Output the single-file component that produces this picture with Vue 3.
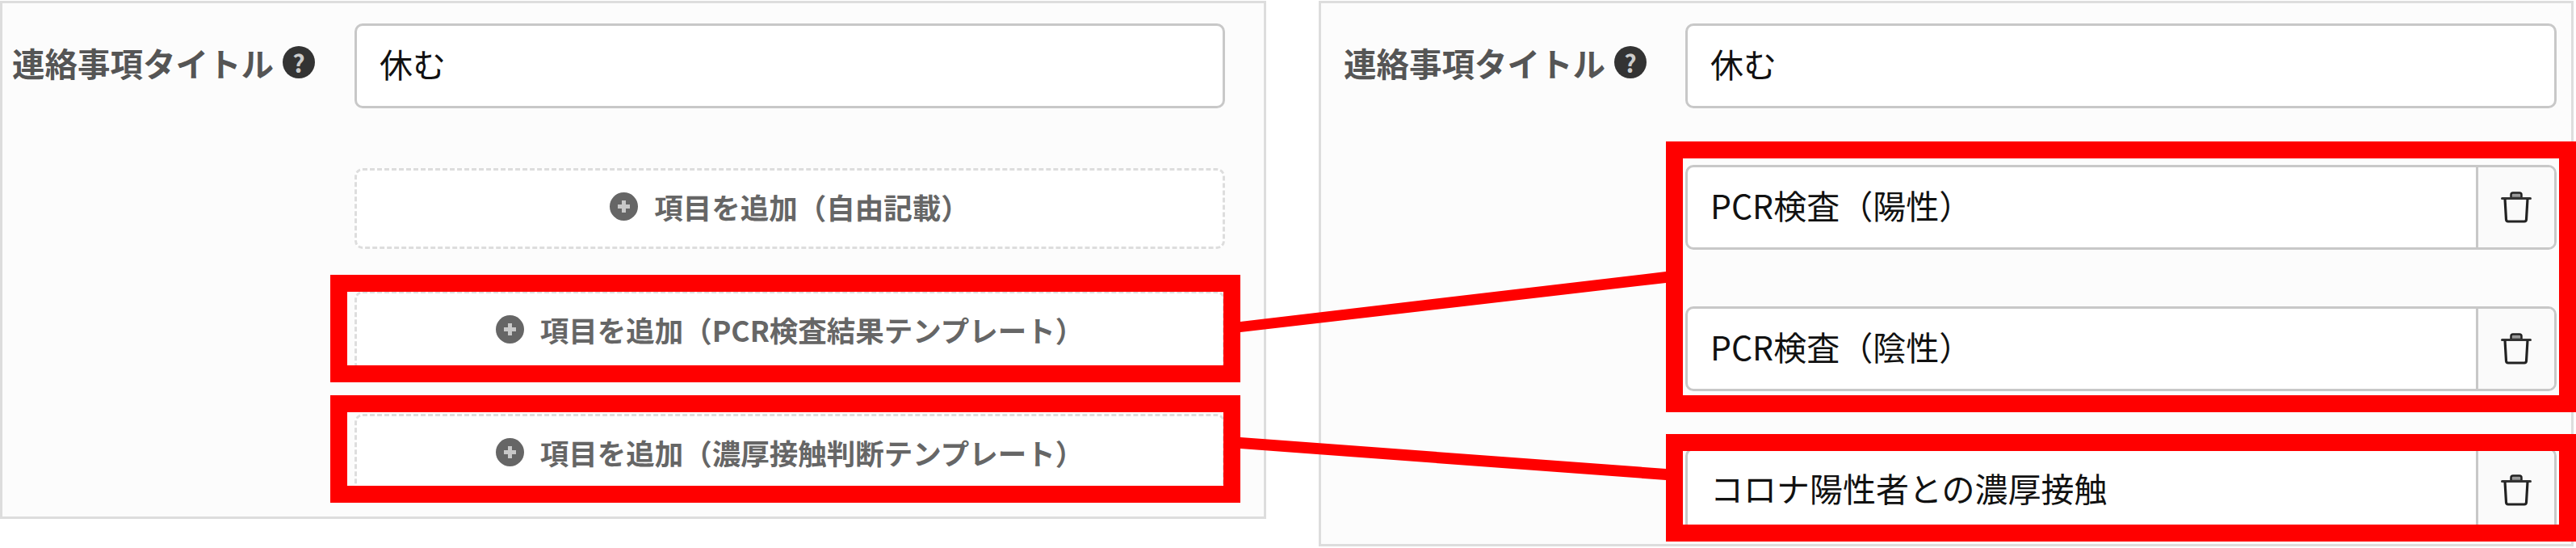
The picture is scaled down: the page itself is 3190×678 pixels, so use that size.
<template>
  <div class="page">
    <div class="panels">
      <section class="panel panel-add">
        <div class="label">
          <span>連絡事項タイトル</span>
          <span class="help">?</span>
        </div>
        <div class="fields">
          <div class="text-input">休む</div>
          <div class="add-list">
            <button v-for="item in addButtons" :key="item" class="add-button">
              <svg class="plus-icon" width="35" height="35" viewBox="0 0 35 35">
                <circle cx="17.5" cy="17.5" r="17.5" fill="#666" />
                <path d="M17.5 10v15M10 17.5h15" stroke="#c8c8c8" stroke-width="5" />
              </svg>
              {{ item }}
            </button>
          </div>
        </div>
      </section>

      <section class="panel panel-result">
        <div class="label">
          <span>連絡事項タイトル</span>
          <span class="help">?</span>
        </div>
        <div class="fields">
          <div class="text-input">休む</div>
          <div v-for="item in resultRows" :key="item" class="input-group">
            <div class="group-text">{{ item }}</div>
            <button class="trash-button">
              <svg width="38" height="40" viewBox="0 0 38 40" fill="none">
                <path d="M12.500 9V5C12.500 3.500 13.500 2.500 15 2.500h8C24.500 2.500 25.500 3.500 25.500 5V9z" fill="#999" stroke="#222" stroke-width="2.500" />
                <path d="M1.500 9.500h35" stroke="#333" stroke-width="3" stroke-linecap="round" />
                <path d="M5 10l1.500 25.500c.1 1.500 1 2.500 2.500 2.500h20c1.500 0 2.400-1 2.500-2.500L33 10" stroke="#222" stroke-width="3.200" />
              </svg>
            </button>
          </div>
        </div>
      </section>
    </div>

    <!-- annotations drawn on top of the screenshot -->
    <svg class="connectors" width="3190" height="678" viewBox="0 0 3190 678">
      <polygon points="1536,398 2063,336 2063,350 1536,411" fill="#f00" />
      <polygon points="1536,541 2063,580 2063,594 1536,555" fill="#f00" />
    </svg>
    <div class="mark mark-l1"></div>
    <div class="mark mark-l2"></div>
    <div class="mark mark-r1"></div>
    <div class="mark mark-r2"></div>
  </div>
</template>

<script setup>
const addButtons = [
  '項目を追加（自由記載）',
  '項目を追加（PCR検査結果テンプレート）',
  '項目を追加（濃厚接触判断テンプレート）',
];

const resultRows = ['PCR検査（陽性）', 'PCR検査（陰性）', 'コロナ陽性者との濃厚接触'];
</script>

<style>
html,
body {
  background: #fff;
}
</style>

<style scoped>
.page {
  position: relative;
  width: 3190px;
  height: 678px;
  overflow: hidden;
  font-family: "Noto Sans CJK JP", "Noto Sans", sans-serif;
  text-spacing-trim: space-all;
}

.panels {
  display: flex;
  align-items: flex-start;
  gap: 65px;
  padding-top: 1px;
}

.panel {
  display: flex;
  box-sizing: border-box;
  border: 3px solid #ddd;
  background: #fcfcfc;
  padding-top: 25px;
}

.panel-add {
  width: 1568px;
  height: 641px;
  padding-left: 12px;
  padding-right: 48px;
}

.panel-result {
  width: 1554px;
  height: 675px;
  padding-left: 28px;
  padding-right: 18px;
}

.panel-add .label {
  width: 424px;
}

.panel-result .label {
  width: 423px;
}

.label {
  flex: none;
  display: flex;
  align-items: center;
  gap: 11px;
  height: 40px;
  margin-top: 28px;
  font-size: 40.500px;
  font-weight: 700;
  color: #555;
  white-space: nowrap;
}

.help {
  display: flex;
  align-items: center;
  justify-content: center;
  width: 40px;
  height: 40px;
  border-radius: 50%;
  background: #333;
  color: #ccc;
  font-size: 30px;
  line-height: 1;
}

.fields {
  flex: 1;
  display: flex;
  flex-direction: column;
  gap: 70px;
}

.text-input,
.input-group {
  box-sizing: border-box;
  height: 105px;
  border: 3px solid #c8c8c8;
  border-radius: 10px;
  background: #fff;
  color: #111;
  font-size: 41px;
}

.text-input {
  display: flex;
  align-items: center;
  padding: 0 0 8px 28px;
}

.add-list {
  display: flex;
  flex-direction: column;
  gap: 52px;
  margin-top: 4px;
}

.add-button {
  display: flex;
  align-items: center;
  justify-content: center;
  gap: 20px;
  box-sizing: border-box;
  height: 100px;
  padding: 0 0 5px;
  border: 3px dashed #ddd;
  border-radius: 10px;
  background: #fff;
  color: #666;
  font-family: inherit;
  font-size: 35.500px;
  font-weight: 700;
}

.plus-icon {
  flex: none;
}

.input-group {
  display: flex;
  overflow: hidden;
}

.group-text {
  flex: 1;
  display: flex;
  align-items: center;
  padding: 0 0 8px 28px;
}

.trash-button {
  flex: none;
  display: flex;
  align-items: center;
  justify-content: center;
  width: 97px;
  border: none;
  border-left: 3px solid #c8c8c8;
  background: #fafafa;
  padding: 0 0 2px;
}

.connectors {
  position: absolute;
  top: 0;
  left: 0;
}

.mark {
  position: absolute;
  box-sizing: border-box;
  border: 21px solid #f00;
}

.mark-l1 {
  left: 409px;
  top: 340px;
  width: 1127px;
  height: 133px;
}

.mark-l2 {
  left: 409px;
  top: 489px;
  width: 1127px;
  height: 133px;
}

.mark-r1 {
  left: 2063px;
  top: 175px;
  width: 1127px;
  height: 335px;
}

.mark-r2 {
  left: 2063px;
  top: 537px;
  width: 1127px;
  height: 133px;
}
</style>
